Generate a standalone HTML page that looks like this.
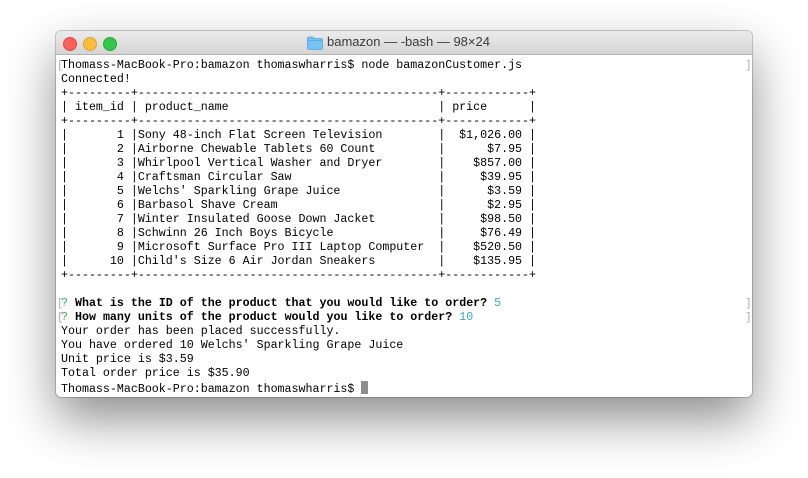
<!DOCTYPE html>
<html><head><meta charset="utf-8"><style>
html,body{margin:0;padding:0;width:808px;height:478px;background:#fff;overflow:hidden}
.win{position:absolute;left:56px;top:31px;width:696px;height:366px;border-radius:5px;background:#fff;box-shadow:0 22px 50px rgba(0,0,0,0.45),0 0 0 1px rgba(0,0,0,0.2);overflow:hidden}
.tb{position:absolute;left:0;top:0;width:696px;height:23px;background:linear-gradient(#ebebeb,#d5d5d5);border-bottom:1px solid #b4b4b4}
.dot{position:absolute;top:6px;width:12px;height:12px;border-radius:50%}
.title{position:absolute;left:271px;top:3px;font:13px "Liberation Sans",sans-serif;color:#3c3c3c;white-space:nowrap}
pre{position:absolute;left:5px;top:28px;margin:0;font:11.65px/14px "Liberation Mono",monospace;color:#000;letter-spacing:0}
.g{color:#2fb344}.c{color:#3aa8bf}
.br{position:absolute;font:11px/14px "Liberation Mono",monospace;color:#aaa}
.cur{display:inline-block;width:7px;height:13px;background:#8e8e8e;vertical-align:-2px}
</style></head><body>
<div class="win">
<div class="tb">
<div class="dot" style="left:7px;background:#fc605b;border:0.5px solid #de4a44"></div>
<div class="dot" style="left:27px;background:#fdbc40;border:0.5px solid #dea236"></div>
<div class="dot" style="left:47px;background:#34c84a;border:0.5px solid #27aa35"></div>
<svg style="position:absolute;left:251px;top:5px" width="16" height="14" viewBox="0 0 16 14"><path d="M0.5 2.5 Q0.5 1 2 1 H6 L7.5 2.5 H14 Q15.5 2.5 15.5 4 V12 Q15.5 13.5 14 13.5 H2 Q0.5 13.5 0.5 12 Z" fill="#74c3f2" stroke="#55a6dc" stroke-width="0.8"/><rect x="0.7" y="4" width="14.6" height="1" fill="#5aaee3"/></svg>
<div class="title">bamazon — -bash — 98×24</div>
</div>
<div class="br" style="left:1px;top:28px">[</div>
<div class="br" style="left:689px;top:28px">]</div>
<div class="br" style="left:1px;top:266px">[</div>
<div class="br" style="left:1px;top:280px">[</div>
<div class="br" style="left:689px;top:266px">]</div>
<div class="br" style="left:689px;top:280px">]</div>
<pre>Thomass-MacBook-Pro:bamazon thomaswharris$ node bamazonCustomer.js
Connected!
+---------+-------------------------------------------+------------+
| item_id | product_name                              | price      |
+---------+-------------------------------------------+------------+
|       1 |Sony 48-inch Flat Screen Television        |  $1,026.00 |
|       2 |Airborne Chewable Tablets 60 Count         |      $7.95 |
|       3 |Whirlpool Vertical Washer and Dryer        |    $857.00 |
|       4 |Craftsman Circular Saw                     |     $39.95 |
|       5 |Welchs' Sparkling Grape Juice              |      $3.59 |
|       6 |Barbasol Shave Cream                       |      $2.95 |
|       7 |Winter Insulated Goose Down Jacket         |     $98.50 |
|       8 |Schwinn 26 Inch Boys Bicycle               |     $76.49 |
|       9 |Microsoft Surface Pro III Laptop Computer  |    $520.50 |
|      10 |Child's Size 6 Air Jordan Sneakers         |    $135.95 |
+---------+-------------------------------------------+------------+

<span class="g">?</span> <b>What is the ID of the product that you would like to order?</b> <span class="c">5</span>
<span class="g">?</span> <b>How many units of the product would you like to order?</b> <span class="c">10</span>
Your order has been placed successfully.
You have ordered 10 Welchs' Sparkling Grape Juice
Unit price is $3.59
Total order price is $35.90
Thomass-MacBook-Pro:bamazon thomaswharris$ <span class="cur"></span></pre>
</div>
</body></html>
